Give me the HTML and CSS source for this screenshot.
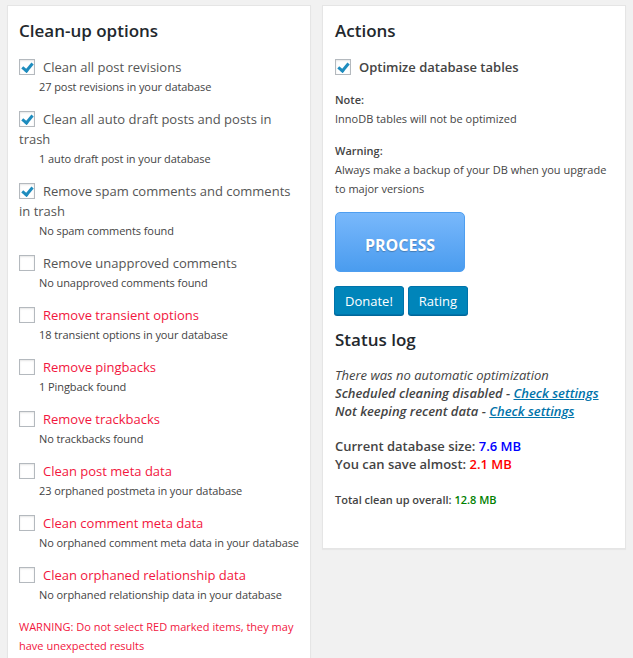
FILE: index.html
```html
<!DOCTYPE html>
<html>
<head>
<meta charset="utf-8">
<link rel="stylesheet" href="styles.css">
</head>
<body>
<div class="wrap">
  <div class="panel left">
    <h2 class="title">Clean-up options</h2>
    <div class="item">
      <div class="label"><span class="cb on"></span>Clean all post revisions</div>
      <div class="sub">27 post revisions in your database</div>
    </div>
    <div class="item">
      <div class="label"><span class="cb on"></span>Clean all auto draft posts and posts in trash</div>
      <div class="sub">1 auto draft post in your database</div>
    </div>
    <div class="item">
      <div class="label"><span class="cb on"></span>Remove spam comments and comments in trash</div>
      <div class="sub">No spam comments found</div>
    </div>
    <div class="item">
      <div class="label"><span class="cb"></span>Remove unapproved comments</div>
      <div class="sub">No unapproved comments found</div>
    </div>
    <div class="item">
      <div class="label red"><span class="cb"></span>Remove transient options</div>
      <div class="sub">18 transient options in your database</div>
    </div>
    <div class="item">
      <div class="label red"><span class="cb"></span>Remove pingbacks</div>
      <div class="sub">1 Pingback found</div>
    </div>
    <div class="item">
      <div class="label red"><span class="cb"></span>Remove trackbacks</div>
      <div class="sub">No trackbacks found</div>
    </div>
    <div class="item">
      <div class="label red"><span class="cb"></span>Clean post meta data</div>
      <div class="sub">23 orphaned postmeta in your database</div>
    </div>
    <div class="item">
      <div class="label red"><span class="cb"></span>Clean comment meta data</div>
      <div class="sub">No orphaned comment meta data in your database</div>
    </div>
    <div class="item">
      <div class="label red"><span class="cb"></span>Clean orphaned relationship data</div>
      <div class="sub">No orphaned relationship data in your database</div>
    </div>
    <p class="warn">WARNING: Do not select RED marked items, they may have unexpected results</p>
  </div>
  <div class="panel right">
    <h2 class="title">Actions</h2>
    <div class="label strong"><span class="cb on"></span>Optimize database tables</div>
    <div class="note first">
      <div class="nh">Note:</div>
      <div>InnoDB tables will not be optimized</div>
    </div>
    <div class="note second">
      <div class="nh">Warning:</div>
      <div>Always make a backup of your DB when you upgrade to major versions</div>
    </div>
    <button class="process">PROCESS</button>
    <div class="btns">
      <button class="wpbtn">Donate!</button>
      <button class="wpbtn">Rating</button>
    </div>
    <h2 class="title status">Status log</h2>
    <div class="log">
      <div><i>There was no automatic optimization</i></div>
      <div class="bi"><i>Scheduled cleaning disabled - <a href="#">Check settings</a></i></div>
      <div class="bi"><i>Not keeping recent data - <a href="#">Check settings</a></i></div>
    </div>
    <div class="sizes">
      <div>Current database size: <span class="blue">7.6 MB</span></div>
      <div>You can save almost: <span class="redv">2.1 MB</span></div>
    </div>
    <div class="total">Total clean up overall: <span class="green">12.8 MB</span></div>
  </div>
</div>
</body>
</html>
```
FILE: styles.css
```css
html, body {
  margin: 0;
  padding: 0;
  background: #f1f1f1;
}
body {
  font-family: "Open Sans", "Noto Sans", sans-serif;
  color: #444;
  font-size: 13px;
}
.wrap {
  display: flex;
  align-items: flex-start;
  gap: 11px;
  padding: 5px 7px;
}
.panel {
  width: 304px;
  box-sizing: border-box;
  background: #fff;
  border: 1px solid #e5e5e5;
  box-shadow: 0 1px 1px rgba(0,0,0,.04);
  padding: 12px 11px 12px 11px;
}
.right {
  height: 544px;
  padding-left: 12px;
}
.title {
  margin: 0 0 13px 0;
  font-size: 17px;
  font-weight: 600;
  color: #23282d;
  line-height: 26px;
}
.item {
  margin-bottom: 12px;
}
.label {
  font-size: 13px;
  line-height: 20px;
  color: #555;
}
.label.red {
  color: #f2163e;
}
.label.strong {
  font-weight: 600;
  color: #444;
}
.cb {
  display: inline-block;
  width: 16px;
  height: 16px;
  box-sizing: border-box;
  border: 1px solid #b4b9be;
  box-shadow: inset 0 1px 2px rgba(0,0,0,.1);
  vertical-align: -3px;
  margin-right: 8px;
  background: #fff;
  position: relative;
}
.cb.on::after {
  content: "";
  position: absolute;
  left: 4px;
  top: 1px;
  width: 4px;
  height: 8px;
  border-right: 3px solid #1e8cbe;
  border-bottom: 3px solid #1e8cbe;
  transform: rotate(40deg);
}
.sub {
  font-size: 11px;
  line-height: 20px;
  padding-left: 20px;
  color: #444;
  white-space: nowrap;
  letter-spacing: -0.08px;
}
.warn {
  margin: 10px 0 0 0;
  font-size: 11px;
  line-height: 19px;
  color: #f2163e;
  padding-bottom: 12px;
}
.note {
  font-size: 11px;
  line-height: 19px;
}
.note.first {
  margin-top: 13px;
}
.note.second {
  margin-top: 13px;
}
.nh {
  font-weight: 600;
}
.process {
  display: block;
  margin-top: 14px;
  width: 130px;
  height: 60px;
  border: 1px solid #4e9ef0;
  border-radius: 5px;
  background: linear-gradient(#79b8fb, #4a9cef);
  color: #fff;
  font-family: "Open Sans", sans-serif;
  font-weight: 700;
  font-size: 16px;
  text-shadow: 0 1px 1px rgba(0,0,0,.25);
  padding: 6px 0 0 0;
}
.btns {
  display: flex;
  gap: 4px;
  margin-top: 14px;
  margin-left: -1px;
}
.wpbtn {
  height: 29px;
  padding: 0 10px;
  background: #0085ba;
  border: 1px solid #0073aa;
  border-radius: 3px;
  box-shadow: 0 1px 0 #006799;
  color: #fff;
  font-family: "Open Sans", sans-serif;
  font-size: 13px;
}
.status {
  margin-top: 12px;
  margin-bottom: 13px;
}
.log {
  font-size: 13px;
  line-height: 18px;
}
.bi {
  font-weight: 600;
}
.log a {
  color: #0073aa;
}
.sizes {
  margin-top: 17px;
  font-weight: 600;
  line-height: 18px;
}
.blue { color: #00f; }
.redv { color: #f00; }
.total {
  margin-top: 19px;
  font-size: 11px;
  font-weight: 600;
}
.green { color: #008000; }
```
